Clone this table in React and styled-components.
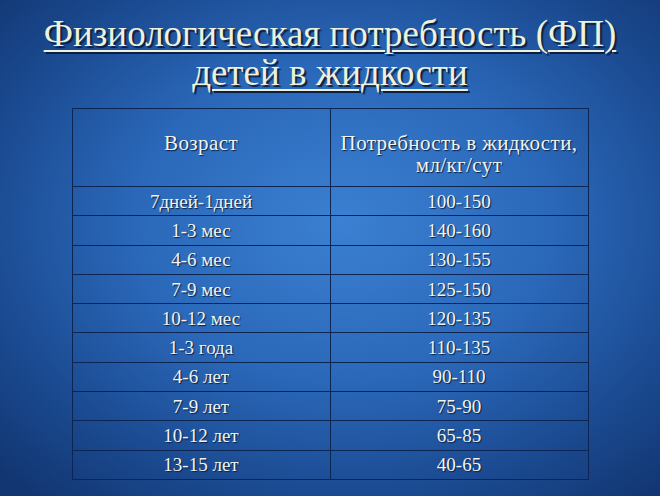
import React from "react";
import styled, { createGlobalStyle } from "styled-components";

const GlobalStyle = createGlobalStyle`
  html, body {
    margin: 0;
    padding: 0;
  }
  body {
    background: #16407e;
  }
`;

const Slide = styled.div`
  width: 660px;
  height: 496px;
  box-sizing: border-box;
  overflow: hidden;
  display: flex;
  flex-direction: column;
  align-items: center;
  padding-top: 14px;
  background: radial-gradient(
    ellipse 72% 72% at 52% 45%,
    #3b80d2 0%,
    #2a67b8 45%,
    #1b4b92 75%,
    #123672 100%
  );
  font-family: "Liberation Serif", "DejaVu Serif", serif;
`;

const Title = styled.h1`
  margin: 0;
  font-weight: 400;
  font-size: 37px;
  line-height: 39px;
  text-align: center;
  color: #eef2dc;
  text-decoration: underline;
  text-decoration-thickness: 2px;
  text-underline-offset: 4px;
  text-shadow: 2px 2px 1px #0b1f44;
`;

const Table = styled.table`
  margin-top: 16px;
  width: 517px;
  border-collapse: collapse;
  table-layout: fixed;
  border: 1px solid #0d2552;
`;

const Cell = styled.td`
  border: 1px solid #0d2552;
  padding: 0;
  height: 28.3px;
  text-align: center;
  vertical-align: middle;
  color: #f2f4ee;
  font-size: 19px;
  line-height: 21px;
  text-shadow: 1px 1px 1px #0b1f44;
`;

const HeadCell = styled(Cell)`
  height: 78px;
  box-sizing: border-box;
  vertical-align: top;
  padding-top: 23px;
  font-size: 21px;
  line-height: 22px;
  letter-spacing: 0.4px;
`;

const rows = [
  ["7дней-1дней", "100-150"],
  ["1-3 мес", "140-160"],
  ["4-6 мес", "130-155"],
  ["7-9 мес", "125-150"],
  ["10-12 мес", "120-135"],
  ["1-3 года", "110-135"],
  ["4-6 лет", "90-110"],
  ["7-9 лет", "75-90"],
  ["10-12 лет", "65-85"],
  ["13-15 лет", "40-65"],
];

export default function App() {
  return (
    <>
      <GlobalStyle />
      <Slide>
        <Title>
          Физиологическая потребность (ФП)
          <br />
          детей в жидкости
        </Title>
        <Table>
          <tbody>
            <tr>
              <HeadCell>Возраст</HeadCell>
              <HeadCell>
                Потребность в жидкости,
                <br />
                мл/кг/сут
              </HeadCell>
            </tr>
            {rows.map(([age, need]) => (
              <tr key={age}>
                <Cell>{age}</Cell>
                <Cell>{need}</Cell>
              </tr>
            ))}
          </tbody>
        </Table>
      </Slide>
    </>
  );
}
